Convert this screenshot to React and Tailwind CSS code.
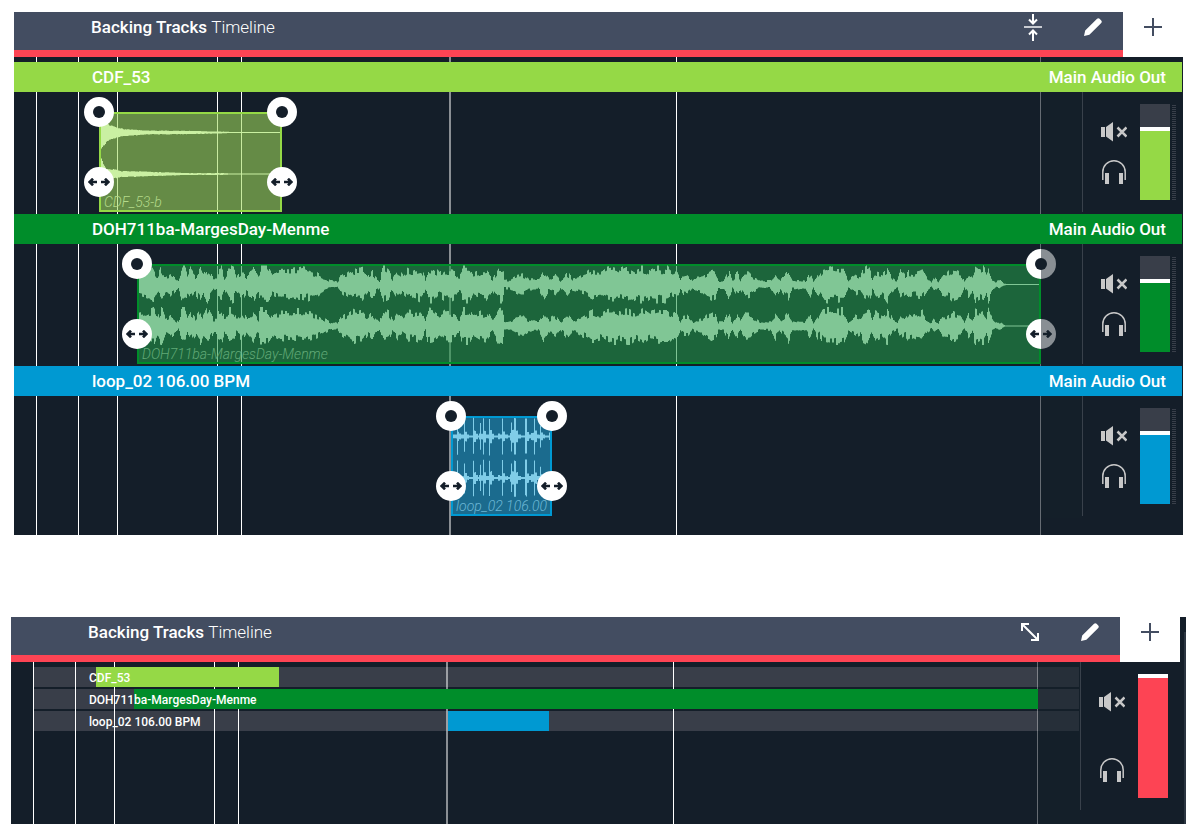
import { useState } from 'react';

const MARKERS = [22, 64, 103, 203, 227, 662];
const PLAYHEAD = 435;
const END = 1026;

// [x, amplitude] keypoints of the waveforms
const DECAY_A = [[2, 19], [5, 14], [7, 11], [10, 8], [16, 6], [24, 4], [36, 3], [48, 2], [80, 2], [120, 1], [150, 0], [180, 0]];
const DECAY_B = [[2, 16], [4, 11], [7, 6], [14, 5], [22, 3], [36, 3], [60, 2], [90, 1], [120, 1], [150, 0], [180, 0]];
const SONG = [
  [2, 12], [16, 17], [20, 9], [24, 18], [28, 8], [33, 11], [41, 4], [45, 18], [48, 17], [50, 9], [53, 15], [58, 9], [63, 17], [66, 10],
  [71, 18], [76, 7], [79, 7], [81, 16], [84, 18], [87, 6], [92, 18], [96, 16], [99, 7], [105, 14], [109, 8], [116, 16], [121, 7],
  [123, 18], [130, 18], [135, 10], [140, 13], [153, 14], [166, 16], [180, 11], [186, 7], [193, 4], [200, 3], [203, 8], [211, 13],
  [215, 16], [220, 14], [225, 15], [230, 9], [235, 15], [238, 8], [242, 4], [246, 18], [251, 15], [255, 6], [260, 14], [265, 9],
  [270, 15], [276, 13], [284, 16], [288, 5], [291, 18], [296, 16], [302, 11], [308, 15], [313, 15], [318, 13], [322, 5], [325, 18],
  [332, 18], [336, 10], [343, 13], [349, 14], [355, 6], [361, 17], [365, 18], [367, 4], [373, 5], [380, 9], [386, 10], [391, 6],
  [401, 5], [406, 14], [411, 7], [418, 10], [423, 4], [430, 12], [435, 6], [441, 8], [448, 11], [455, 15], [463, 13], [470, 17],
  [476, 18], [483, 15], [490, 18], [498, 14], [506, 18], [513, 14], [521, 17], [530, 16], [535, 12], [539, 14], [543, 5], [546, 9],
  [550, 10], [555, 4], [560, 7], [565, 8], [570, 12], [575, 14], [578, 13], [581, 4], [586, 4], [591, 14], [595, 4], [600, 13],
  [603, 5], [608, 13], [612, 12], [616, 8], [623, 4], [633, 4], [638, 13], [643, 5], [651, 15], [655, 5], [668, 4], [673, 13],
  [676, 4], [680, 12], [682, 9], [686, 16], [695, 17], [706, 16], [711, 5], [718, 10], [723, 8], [726, 15], [731, 18], [735, 7],
  [738, 14], [745, 11], [750, 17], [755, 7], [760, 4], [763, 13], [768, 9], [771, 14], [776, 11], [785, 14], [790, 6], [794, 3],
  [796, 8], [801, 3], [805, 10], [810, 11], [815, 15], [823, 12], [827, 3], [831, 12], [835, 8], [838, 18], [843, 15], [846, 17],
  [849, 10], [851, 19], [855, 6], [858, 3], [863, 4], [867, 1], [870, 0], [902, 0],
];
// drum hits: the level holds until the next keypoint
const LOOP = [
  [2, 2], [6, 19], [7, 5], [8, 3], [10, 2], [13, 16], [14, 5], [16, 2], [18, 1], [22, 19], [23, 6], [25, 3], [27, 1], [28, 3], [29, 14],
  [30, 3], [32, 19], [33, 6], [35, 2], [38, 19], [39, 7], [41, 3], [43, 1], [47, 3], [49, 2], [51, 19], [52, 5], [54, 2], [57, 1],
  [59, 4], [60, 15], [61, 7], [63, 19], [65, 6], [67, 2], [70, 1], [74, 19], [76, 5], [78, 2], [80, 4], [83, 19], [84, 6], [86, 2],
  [89, 12], [90, 4], [92, 2], [94, 1], [98, 4],
];

const TRACKS = [
  {
    id: 'cdf', name: 'CDF_53', clip: 'CDF_53-b', start: 85, length: 183, volume: 75, color: '#95d946',
    bar: 'bg-[#95d946]', body: 'border-[#95d946] bg-[#a1da5b]/58', wave: 'text-[#caf0a2]', label: 'text-[#b4da8a]',
    channels: [DECAY_A, DECAY_B], gain: 1, noise: 0.2,
  },
  {
    id: 'doh', name: 'DOH711ba-MargesDay-Menme', clip: 'DOH711ba-MargesDay-Menme', start: 123, length: 904, volume: 75, color: '#008d2a',
    bar: 'bg-[#008d2a]', body: 'border-[#008d2a] bg-[#229a48]/58', wave: 'text-[#80c695]', label: 'text-[#62aa78]',
    channels: [SONG, SONG], gain: 1.2, noise: 0.5,
  },
  {
    id: 'loop', name: 'loop_02 106.00 BPM', clip: 'loop_02 106.00', start: 437, length: 101, volume: 75, color: '#0099d2',
    bar: 'bg-[#0099d2]', body: 'border-[#0099d2] bg-[#20a3d8]/58', wave: 'text-[#80cde8]', label: 'text-[#6cb8d6]',
    channels: [LOOP, LOOP], gain: 1, noise: 0.1, hold: true,
  },
];

const rand = (n) => {
  const v = Math.sin(n * 12.9898) * 43758.5453;
  return v - Math.floor(v);
};

const amplitudeAt = (points, x, hold) => {
  const i = points.findIndex((p) => p[0] > x);
  if (i === -1) return points[points.length - 1][1];
  if (i === 0) return points[0][1];
  const [x0, a0] = points[i - 1];
  const [x1, a1] = points[i];
  return hold ? a0 : a0 + ((a1 - a0) * (x - x0)) / (x1 - x0);
};

const wavePath = ({ length, gain, noise, hold }, points, center, seed) => {
  const top = [];
  const bottom = [];
  for (let x = 2; x < length - 2; x++) {
    const a = amplitudeAt(points, x, hold) * gain;
    const up = Math.min(19, Math.max(0.5, a * (1 - noise * rand(Math.floor(x / 2) + seed))));
    const down = Math.min(19, Math.max(0.5, a * (1 - noise * rand(Math.floor((x + 1) / 2) * 3 + seed + 7))));
    const y0 = (center - up).toFixed(1);
    const y1 = (center + down).toFixed(1);
    top.push(`${x} ${y0}`, `${x + 1} ${y0}`);
    bottom.unshift(`${x + 1} ${y1}`, `${x} ${y1}`);
  }
  return `M${top.join('L')}L${bottom.join('L')}Z`;
};

function CollapseIcon() {
  return (
    <svg width="18" height="28" viewBox="0 0 18 28" fill="none" stroke="currentColor" strokeWidth="2">
      <path d="M0 14h18" stroke="#c9ccd2" />
      <path d="M9 1v9.500M5 6.500l4 4 4-4M9 28v-10M5 21.500l4-4 4 4" />
    </svg>
  );
}

function ExpandIcon() {
  return (
    <svg width="18" height="18" viewBox="0 0 18 18" fill="none" stroke="currentColor" strokeWidth="2">
      <path d="M1 8V1h7M1 1l16 16M10 17h7v-7" />
    </svg>
  );
}

function PencilIcon() {
  return (
    <svg width="18" height="18" viewBox="0 0 18 18" fill="currentColor">
      <path d="M0 18l1.2-5.4L12.8 1q1.4-1.4 2.8-.2l1.6 1.6q1.2 1.3-.2 2.8L5.4 16.8z" />
    </svg>
  );
}

function PlusIcon() {
  return (
    <svg width="18" height="18" viewBox="0 0 18 18" stroke="currentColor" strokeWidth="2">
      <path d="M9 0v18M0 9h18" />
    </svg>
  );
}

function MuteIcon() {
  return (
    <svg width="26" height="20" viewBox="0 0 26 20" fill="#c8c8c8">
      <path d="M0 5h4v10H0zM5 5l7-5v19.500l-7-5z" />
      <path d="M16.500 5.500l9 9M25.500 5.500l-9 9" stroke="#c8c8c8" strokeWidth="2.500" />
    </svg>
  );
}

function HeadphonesIcon() {
  return (
    <svg width="24" height="24" viewBox="0 0 24 24" fill="none" stroke="#c8c8c8">
      <path d="M.8 20v-8a11.200 11.200 0 0 1 22.400 0v8" strokeWidth="1.500" />
      <path d="M3 13h4v11H3zM17 13h4v11h-4z" fill="#c8c8c8" stroke="none" />
    </svg>
  );
}

function ResizeIcon() {
  return (
    <svg width="22" height="8" viewBox="0 0 22 8" fill="none" stroke="currentColor" strokeWidth="2.600">
      <path d="M9 4H2M5 .7L1.700 4 5 7.300M13 4h7M17 .7L20.300 4 17 7.300" />
    </svg>
  );
}

function TimelineHeader({ collapsed }) {
  return (
    <header className="flex h-[45px]">
      <div className="flex-1 bg-[#434d61] border-b-[7px] border-[#fd4454]">
        <div className="flex h-[30px] items-center justify-between pl-[77px] pr-[21px]">
          <h2 className="text-[17px] leading-5 font-medium text-white">
            Backing Tracks <span className="font-light">Timeline</span>
          </h2>
          <div className="flex items-center gap-[42px] text-white">
            <button type="button" aria-label={collapsed ? 'Expand' : 'Collapse'}>
              {collapsed ? <ExpandIcon /> : <CollapseIcon />}
            </button>
            <button type="button" aria-label="Edit">
              <PencilIcon />
            </button>
          </div>
        </div>
      </div>
      <button type="button" aria-label="Add track" className="flex w-[60px] items-start justify-center bg-white pt-[6px] text-[#434d61]">
        <PlusIcon />
      </button>
    </header>
  );
}

function Markers() {
  return (
    <div className="pointer-events-none absolute inset-0 z-10">
      {MARKERS.map((x) => (
        <div key={x} className="absolute inset-y-0 w-px bg-white" style={{ left: x }} />
      ))}
      <div className="absolute inset-y-0 w-[2px] bg-white/50" style={{ left: PLAYHEAD }} />
      <div className="absolute inset-y-0 w-px bg-white/35" style={{ left: END }} />
    </div>
  );
}

function Fader({ label, color, initial, size }) {
  const [value, setValue] = useState(initial);
  return (
    <input
      type="range"
      aria-label={label}
      value={value}
      onChange={(e) => setValue(Number(e.target.value))}
      className={`w-[30px] ${size} appearance-none [writing-mode:vertical-lr] [direction:rtl] [&::-webkit-slider-thumb]:appearance-none [&::-webkit-slider-thumb]:h-1 [&::-webkit-slider-thumb]:w-[30px] [&::-webkit-slider-thumb]:bg-white`}
      style={{ background: `linear-gradient(to top, ${color} ${value}%, #393e49 ${value}%)` }}
    />
  );
}

function Handle({ label, x, y, children }) {
  return (
    <button
      type="button"
      aria-label={label}
      className="absolute z-30 flex size-[30px] -translate-x-1/2 -translate-y-1/2 items-center justify-center rounded-full bg-white text-[#141e29]"
      style={{ left: x, top: y }}
    >
      {children}
    </button>
  );
}

function Clip({ track }) {
  const { start, length, channels } = track;
  return (
    <>
      <div
        className={`absolute top-5 z-20 flex h-[100px] items-end border-2 bg-clip-padding ${track.body}`}
        style={{ left: start, width: length }}
      >
        <svg className={`absolute -top-[2px] -left-[2px] max-w-none ${track.wave}`} width={length} height="100" fill="currentColor">
          <path d={wavePath(track, channels[0], 20.5, 1)} />
          <path d={wavePath(track, channels[1], 62, 90)} />
        </svg>
        <span className={`relative ml-[3px] text-[14px] leading-4 font-light whitespace-nowrap italic ${track.label}`}>
          {track.clip}
        </span>
      </div>
      {[start, start + length].map((x, i) => (
        <div key={x}>
          <Handle label={i ? 'Fade out' : 'Fade in'} x={x} y={20}>
            <span className="size-3 rounded-full bg-[#141e29]" />
          </Handle>
          <Handle label={i ? 'Trim end' : 'Trim start'} x={x} y={90}>
            <ResizeIcon />
          </Handle>
        </div>
      ))}
    </>
  );
}

function Track({ track }) {
  return (
    <section>
      <div className={`relative z-30 mr-px flex h-[30px] items-center justify-between pr-4 pl-[78px] text-[17px] leading-5 font-medium text-white ${track.bar}`}>
        <h3>{track.name}</h3>
        <span>Main Audio Out</span>
      </div>
      <div className="flex h-[122px] items-start">
        <div className="relative h-full flex-1">
          <Clip track={track} />
          <div className="pointer-events-none absolute inset-y-0 right-0 z-40 bg-[#131f2a]/50" style={{ left: END + 1 }} />
        </div>
        <div className="flex h-[120px] w-[101px] items-start border-l border-[#39414b] pt-3 pl-[18px]">
          <div className="flex flex-col items-center gap-[18px] pt-[18px]">
            <button type="button" aria-label="Mute"><MuteIcon /></button>
            <button type="button" aria-label="Solo"><HeadphonesIcon /></button>
          </div>
          <div className="ml-[13px] flex gap-[2px]">
            <Fader label={`${track.name} volume`} color={track.color} initial={track.volume} size="h-24" />
            <div className="h-24 w-1 bg-[repeating-linear-gradient(to_bottom,#141e29_0_1px,#393f4a_1px_2px)]" />
          </div>
        </div>
      </div>
    </section>
  );
}

function CollapsedRow({ track }) {
  return (
    <div className="relative h-5 pr-px pl-[23px]">
      <div className="h-5 bg-[#393e49]" />
      <div className={`absolute inset-y-0 z-20 ${track.bar}`} style={{ left: track.start, width: track.length }} />
      <h3 className="absolute inset-y-0 left-[78px] z-30 text-xs leading-[22px] font-medium text-white">{track.name}</h3>
    </div>
  );
}

export default function App() {
  return (
    <main className="flex flex-col gap-[82px] bg-white pt-3 pr-[10px] pb-[11px] pl-[11px] font-['Roboto',sans-serif]">
      <section className="mx-[3px]">
        <TimelineHeader />
        <div className="relative isolate bg-[#141e29] pt-[5px] pb-[17px]">
          <Markers />
          {TRACKS.map((track) => (
            <Track key={track.id} track={track} />
          ))}
        </div>
      </section>

      <section className="relative bg-[#141e29] pr-[6px]">
        <TimelineHeader collapsed />
        <div className="flex h-[162px] items-start">
          <div className="relative isolate flex h-full flex-1 flex-col gap-[2px] pt-[5px]">
            <Markers />
            {TRACKS.map((track) => (
              <CollapsedRow key={track.id} track={track} />
            ))}
            <div className="pointer-events-none absolute inset-y-0 right-0 z-40 bg-[#131f2a]/50" style={{ left: END + 1 }} />
          </div>
          <div className="flex h-[148px] w-[100px] items-start border-l border-[#39414b] pt-3 pl-[18px]">
            <div className="flex flex-col items-center gap-[46px] pt-[18px]">
              <button type="button" aria-label="Mute all"><MuteIcon /></button>
              <button type="button" aria-label="Solo all"><HeadphonesIcon /></button>
            </div>
            <div className="ml-[13px] flex">
              <Fader label="Master volume" color="#fd4454" initial={100} size="h-[124px]" />
            </div>
          </div>
        </div>
        <div className="absolute top-[15px] right-0 bottom-0 w-[2px] bg-[#2b3541]" />
      </section>
    </main>
  );
}
